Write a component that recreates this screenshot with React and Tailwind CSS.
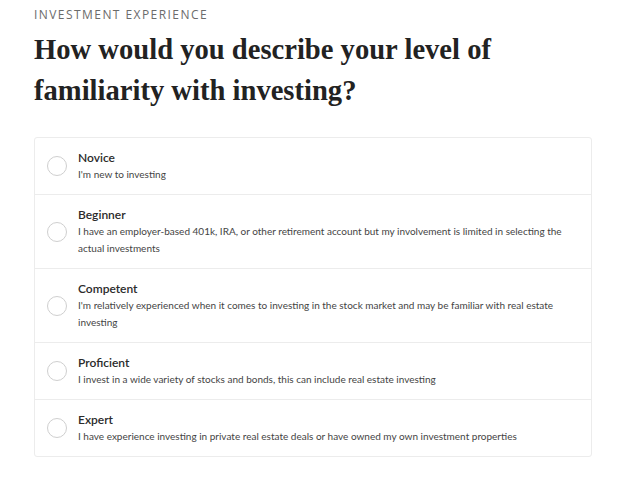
import React from "react";

const levels = [
  { title: "Novice", description: "I'm new to investing" },
  {
    title: "Beginner",
    description:
      "I have an employer-based 401k, IRA, or other retirement account but my involvement is limited in selecting the actual investments",
  },
  {
    title: "Competent",
    description:
      "I'm relatively experienced when it comes to investing in the stock market and may be familiar with real estate investing",
  },
  {
    title: "Proficient",
    description: "I invest in a wide variety of stocks and bonds, this can include real estate investing",
  },
  {
    title: "Expert",
    description:
      "I have experience investing in private real estate deals or have owned my own investment properties",
  },
];

const LevelRow = ({ level, last }) => (
  <label
    className={`flex items-center gap-[11px] pl-[12px] pr-[20px] py-[11px] cursor-pointer ${
      last ? "" : "border-b border-[#ececec]"
    }`}
  >
    <span className="w-[20px] h-[20px] shrink-0 rounded-full border border-[#cfcfcf] bg-white" />
    <span className="flex flex-col">
      <span className="text-[12px] leading-[17px] font-semibold text-[#2b2b2b]">{level.title}</span>
      <span className="text-[10px] leading-[17px] text-[#444]">{level.description}</span>
    </span>
  </label>
);

export default function App() {
  return (
    <div className="min-h-screen bg-white px-[34px] pt-[7px] font-['Lato',sans-serif]">
      <p className="text-[12px] leading-[16px] tracking-[0.12em] text-[#6b6b6b] font-['Open_Sans',sans-serif]">
        INVESTMENT EXPERIENCE
      </p>
      <h1 className="mt-[6px] text-[28.6px] leading-[41px] font-bold text-[#222] font-['Liberation_Serif',serif]">
        How would you describe your level of
        <br />
        familiarity with investing?
      </h1>
      <div className="mt-[26px] w-[558px] rounded-[3px] border border-[#ececec]">
        {levels.map((level, i) => (
          <LevelRow key={level.title} level={level} last={i === levels.length - 1} />
        ))}
      </div>
    </div>
  );
}
